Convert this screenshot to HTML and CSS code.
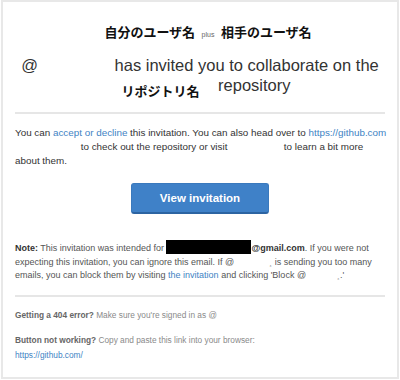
FILE: index.html
```html
<!DOCTYPE html>
<html>
<head>
    <title>Repository invitation</title>
    <link rel="stylesheet" href="styles.css">
</head>
<body>
    <div class="frame">
        <div class="email">
            <div class="names">
                <span class="jp">自分のユーザ名</span> <span class="plus">plus</span> <span class="jp">相手のユーザ名</span>
            </div>

            <h1 class="title">@<span class="blank user"></span> has invited you to collaborate on the <span class="blank repo"><span class="jp">リポジトリ名</span></span> repository</h1>

            <hr class="rule">

            <p class="lead">You can <a href="#">accept or decline</a> this invitation. You can also head over to <a href="#">https://github.com</a><wbr><span class="blank path"></span> to check out the repository or visit <span class="blank profile"></span> to learn a bit more about them.</p>

            <div class="actions">
                <a class="button" href="#">View invitation</a>
            </div>

            <p class="note"><strong>Note:</strong> This invitation was intended for <span class="redacted"></span><strong>@gmail.com</strong>. If you were not expecting this invitation, you can ignore this email. If @<span class="blank nick">¸</span> is sending you too many emails, you can block them by visiting <a href="#">the invitation</a> and clicking 'Block @<span class="blank nick2">¸</span>.'</p>

            <hr class="rule">

            <p class="footer"><strong>Getting a 404 error?</strong> Make sure you're signed in as @</p>
            <p class="footer second"><strong>Button not working?</strong> Copy and paste this link into your browser:
                <a class="url" href="#">https://github.com/</a></p>
        </div>
    </div>
</body>
</html>
```

FILE: styles.css
```css
body {
    font-family: "Liberation Sans", Arial, sans-serif;
    background-color: #fff;
    margin: 0;
    padding: 0;
}

a {
    color: #4183c4;
    text-decoration: none;
}

.frame {
    width: 398px;
    height: 379px;
    margin: 0 1px;
    border: 2px solid #e8e8e8;
    box-sizing: border-box;
}

.email {
    padding: 20px 12px 0 12px;
}

.jp {
    font-family: "Noto Sans CJK JP", sans-serif;
    font-weight: bold;
    font-size: 13px;
    color: #111;
}

.names {
    text-align: center;
    line-height: 20px;
    padding-left: 16px;
}

.names .plus {
    font-size: 7px;
    color: #666;
    margin: 0 2px;
}

.title {
    font-size: 16.5px;
    font-weight: normal;
    color: #333;
    text-align: center;
    line-height: 20px;
    margin: 10px 0 15px 0;
}

.blank {
    display: inline-block;
}

.blank.user {
    width: 72px;
}

.blank.repo {
    width: 104px;
    text-align: left;
    line-height: 12px;
    vertical-align: -5px;
}

.blank.repo .jp {
    padding-left: 12px;
}

.rule {
    border: none;
    height: 2px;
    background-color: #e6e6e6;
    margin: 0;
}

.lead {
    font-size: 9.85px;
    line-height: 14px;
    color: #333;
    margin: 12px -3px 0 0;
}

.blank.path {
    width: 63px;
}

.blank.profile {
    width: 51px;
}

.actions {
    text-align: center;
    margin-top: 15px;
}

.button {
    display: inline-block;
    width: 138px;
    height: 31px;
    box-sizing: border-box;
    background-color: #3f81c8;
    border: 1px solid #3a79bd;
    border-bottom: 2px solid #2c64a2;
    border-radius: 3px;
    color: #fff;
    font-size: 11.5px;
    font-weight: bold;
    line-height: 28px;
}

.note {
    font-size: 9px;
    line-height: 13.5px;
    color: #555;
    margin: 26px 0 12px 0;
}

.note strong {
    color: #333;
}

.redacted {
    display: inline-block;
    width: 85px;
    height: 14px;
    background-color: #000;
    vertical-align: -3px;
}

.blank.nick {
    width: 38px;
    text-align: right;
    color: #999;
}

.blank.nick2 {
    width: 34px;
    text-align: right;
    color: #999;
}

.footer {
    font-size: 8.3px;
    line-height: 15px;
    color: #8a8a8a;
    margin: 11px 0 0 0;
}

.footer.second {
    margin-top: 10px;
}

.footer strong {
    color: #666;
}

.url {
    display: block;
}
```
